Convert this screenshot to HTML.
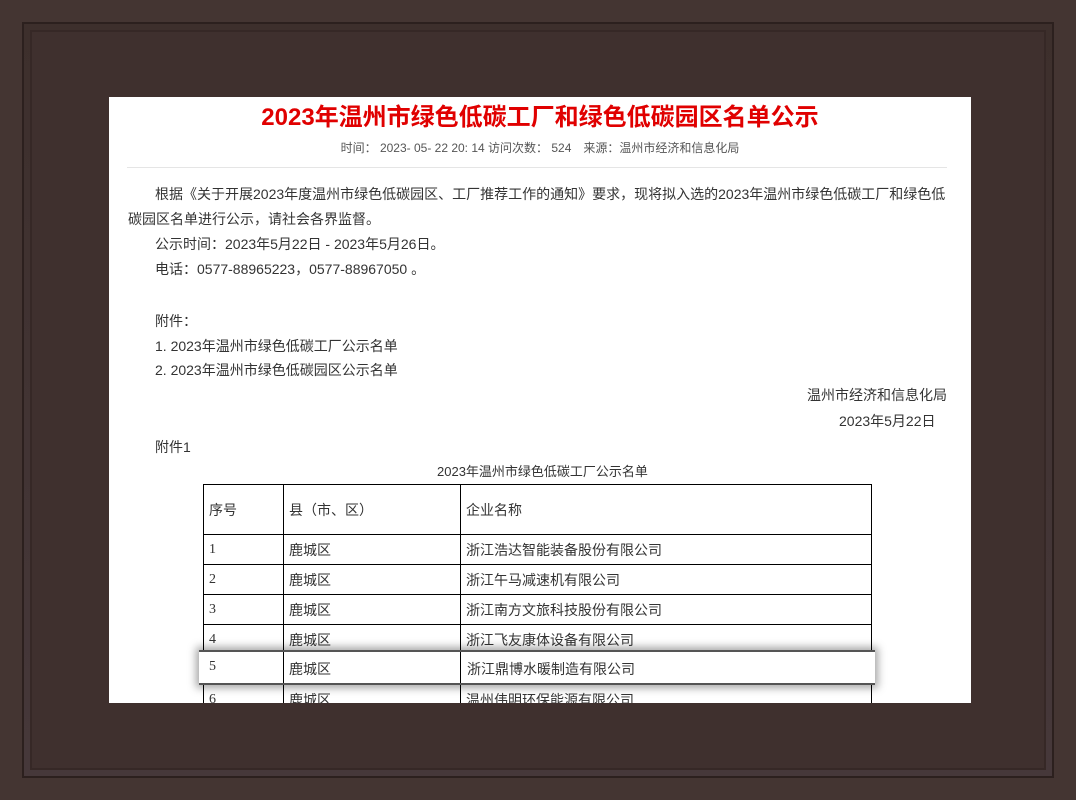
<!DOCTYPE html>
<html><head><meta charset="utf-8"><style>
body{margin:0;width:1076px;height:800px;overflow:hidden;background:#3f302d;font-family:"Liberation Sans","Noto Sans CJK SC",sans-serif;position:relative}
.f1{position:absolute;left:0;top:0;width:1076px;height:800px;background:#443532}
.f2{position:absolute;left:22px;top:22px;right:22px;bottom:22px;border:2px solid #2c201e;background:linear-gradient(#3d2f2c,#46383a)}
.f3{position:absolute;left:30px;top:30px;right:30px;bottom:30px;background:#3f302e;box-shadow:inset 0 0 0 2px #362826}
.page{position:absolute;left:109px;top:97px;width:862px;height:606px;background:#fff;overflow:hidden;color:#333}
.t{position:absolute;top:0px;left:0;width:862px;text-align:center;color:#e00000;font-weight:bold;font-size:24px}
.m{position:absolute;top:42px;left:0;width:862px;text-align:center;font-size:12px;color:#555}
.hr{position:absolute;top:70px;left:18px;width:820px;height:1px;background:#e5e5e5}
.p{position:absolute;font-size:14px;left:46px;white-space:nowrap}
table{position:absolute;left:94px;top:387px;border-collapse:collapse;font-size:14px;width:669px}
td{border:1px solid #000;height:29px;padding:0 5px;font-family:"Liberation Serif","Noto Sans CJK SC",serif}
.hl{position:absolute;left:90px;top:553px;width:676px;height:31px;background:#fff;border-top:2px solid #555;border-bottom:2px solid #555;box-shadow:0 0 8px 3px rgba(0,0,0,.35);font-size:14px}
.hl span{position:absolute;top:7px}
</style></head><body>
<div class="f1"></div><div class="f2"></div><div class="f3"></div>
<div class="page">
<div class="t">2023年温州市绿色低碳工厂和绿色低碳园区名单公示</div>
<div class="m">时间： 2023- 05- 22 20: 14 访问次数： 524　来源：温州市经济和信息化局</div>
<div class="hr"></div>
<div class="p" style="top:87px">根据《关于开展2023年度温州市绿色低碳园区、工厂推荐工作的通知》要求，现将拟入选的2023年温州市绿色低碳工厂和绿色低</div>
<div class="p" style="top:112px;left:19px">碳园区名单进行公示，请社会各界监督。</div>
<div class="p" style="top:137px">公示时间：2023年5月22日 - 2023年5月26日。</div>
<div class="p" style="top:162px">电话：0577-88965223，0577-88967050 。</div>
<div class="p" style="top:214px">附件：</div>
<div class="p" style="top:239px">1. 2023年温州市绿色低碳工厂公示名单</div>
<div class="p" style="top:263px">2. 2023年温州市绿色低碳园区公示名单</div>
<div class="p" style="top:288px;left:698px">温州市经济和信息化局</div>
<div class="p" style="top:314px;left:730px">2023年5月22日</div>
<div class="p" style="top:340px">附件1</div>
<div class="p" style="top:364px;left:328px;font-size:13px">2023年温州市绿色低碳工厂公示名单</div>
<table>
<tr><td style="width:69px;height:49px">序号</td><td style="width:166px">县（市、区）</td><td>企业名称</td></tr>
<tr><td>1</td><td>鹿城区</td><td>浙江浩达智能装备股份有限公司</td></tr>
<tr><td>2</td><td>鹿城区</td><td>浙江午马减速机有限公司</td></tr>
<tr><td>3</td><td>鹿城区</td><td>浙江南方文旅科技股份有限公司</td></tr>
<tr><td>4</td><td>鹿城区</td><td>浙江飞友康体设备有限公司</td></tr>
<tr><td>5</td><td>鹿城区</td><td>浙江鼎博水暖制造有限公司</td></tr>
<tr><td>6</td><td>鹿城区</td><td>温州伟明环保能源有限公司</td></tr>
</table>
<div class="hl"><span style="left:10px;font-family:'Liberation Serif',serif">5</span><span style="left:90px">鹿城区</span><span style="left:268px">浙江鼎博水暖制造有限公司</span>
<div style="position:absolute;left:84px;top:0;bottom:0;width:1px;background:#000"></div>
<div style="position:absolute;left:261px;top:0;bottom:0;width:1px;background:#000"></div></div>
</div>
</body></html>
